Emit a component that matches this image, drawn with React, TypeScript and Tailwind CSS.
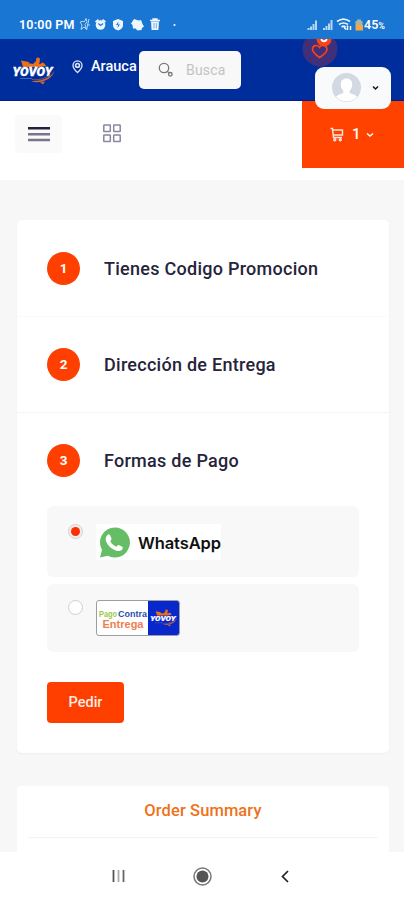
import React, { useState } from 'react';

type PaymentId = 'whatsapp' | 'contraentrega';

const STEPS = ['Tienes Codigo Promocion', 'Dirección de Entrega'];

function YovoyLogo({ className }: { className?: string }) {
  return (
    <svg className={className} viewBox="0 0 44 28" fill="none">
      {/* rider */}
      <path d="M9 3.5l8 1.5-1 5h-5z" fill="#e9711c" />
      <path d="M16 6l5 1 4-4 3 1-1 3 5-1 2 3-6 1H14z" fill="#e9711c" />
      <circle cx="26" cy="2.6" r="2" fill="#e9711c" />
      <path d="M30 5l4 4h-5z" fill="#e9711c" />
      <text
        x="0.5"
        y="19"
        textLength="40"
        lengthAdjust="spacingAndGlyphs"
        fill="#fff"
        stroke="#fff"
        strokeWidth="0.3"
        fontFamily="Roboto, sans-serif"
        fontSize="12"
        fontWeight="900"
        fontStyle="italic"
      >
        YOVOY
      </text>
      <path d="M8 21.5h12" stroke="#4f73bd" strokeWidth="0.8" />
      <path d="M19 24c8 3.5 22-1 23.5-11C40 20 31 24.5 19 24z" fill="#cf6a34" />
      <path d="M20 22.5c7 1 14-1 18-5" stroke="#a85b52" strokeWidth="0.8" />
      <path d="M28 25l3 2.5 2-3" fill="#cf6a34" />
    </svg>
  );
}

function StatusBar() {
  return (
    <div className="flex h-[39px] items-start bg-[#1976d2] pt-[17px] text-white">
      <span className="ml-[19px] w-[57px] whitespace-nowrap text-[12.5px] leading-4 font-semibold tracking-[0.2px]">10:00 PM</span>
      <svg className="ml-[3px]" width="100" height="16" viewBox="0 0 100 16" fill="#eef6fd">
        <path d="M1.5 4.5l4 .2L7 1.5l1 3.3M8 5l-2 2.5 1.5 5L5 10l-3 2.5L3 8 1 5M10 2L7.5 13M8 8h3" stroke="#b9daf6" strokeWidth="1" fill="none" />
        <circle cx="21.5" cy="8" r="4.8" />
        <path d="M16.5 5l3-2.3M26.5 5l-3-2.3" stroke="#eef6fd" strokeWidth="1.6" />
        <path d="M19.3 6.5l2.3 2 2.5-2" stroke="#1976d2" strokeWidth="1.1" fill="none" />
        <path d="M39 2l5 2v4.5c0 2.5-2.5 4.2-5 5-2.5-.8-5-2.5-5-5V4z" />
        <path d="M39.5 4.5L37 8h2l-.5 3L41 7.500h-2z" fill="#1976d2" />
        <path d="M55 2l4.500 1.500 2.500-.5 1.500 4 1.500 2.500-2 1.500-.5 2-4 .5-2-2-2.500 0-.5-3.500-1.500-1.500z" />
        <path d="M71 3.500h10M74 3V2h4v1" stroke="#eef6fd" strokeWidth="1.3" fill="none" />
        <path d="M72 4.500h8l-.6 8.500h-6.800z" />
        <path d="M75 6v5.500M77.300 6v5.500" stroke="#6da8e0" strokeWidth="0.9" />
        <circle cx="95.500" cy="8" r="1.100" />
      </svg>
      <svg className="ml-[127px]" width="59" height="16" viewBox="0 0 59 16" fill="none">
        <path d="M2.500 13v-2M5 13V9.500M7.500 13V7M10 13V3.500M18 13v-2M20.500 13V9M23 13V6.500M25.500 13V3" stroke="#b6d6f3" strokeWidth="2" />
        <path d="M31 4.500c4-3 9-3 13 0M33 7.500c3-2 6-2 9 0M35.500 10c1.500-1 3-1 4 0" stroke="#e6f2fc" strokeWidth="1.700" />
        <path d="M38 10l2 2.500M41.500 13V8.500M44.500 9v4" stroke="#fff" strokeWidth="1.500" />
        <path d="M51 2.500h4V4h1.500v4.500h-7V4H51z" fill="#a9b5a4" />
        <path d="M49.500 8h7.500v5.500h-7.500z" fill="#f5a742" />
      </svg>
      <span className="-ml-px whitespace-nowrap text-[12.5px] leading-4 font-semibold">
        45<span className="text-[9px]">%</span>
      </span>
    </div>
  );
}

function Header() {
  return (
    <header className="relative flex h-[62px] items-start border-b border-[#001f86] bg-[#002d9c]">
      <YovoyLogo className="mt-[18px] ml-3 h-7 w-11" />
      <svg className="mt-[21px] ml-4 h-[14px] w-[11px]" viewBox="0 0 11 14" fill="none" stroke="#dfe6f8">
        <path d="M5.500 12.500C3 10.200 1 8 1 5.400a4.500 4.500 0 019 0c0 2.600-2 4.800-4.500 7.100z" strokeWidth="1.300" />
        <circle cx="5.500" cy="5.400" r="1.900" strokeWidth="1.600" />
      </svg>
      <span className="mt-[18px] ml-2 w-12 text-[14.500px] leading-5 font-medium text-white">Arauca</span>
      <div className="mt-3 flex h-[38px] w-[102px] items-center rounded-[5px] bg-[#f8f8f8] pl-[19px]">
        <svg className="h-4 w-4" viewBox="0 0 16 16" fill="none" stroke="#777" strokeWidth="1.300">
          <circle cx="6" cy="6" r="4.700" />
          <path d="M9.300 9.300l1.500 1.500" />
          <circle cx="12.300" cy="12.300" r="1.800" />
        </svg>
        <span className="ml-[12px] text-[14px] tracking-[0.2px] text-[#c3c3c3]">Busca</span>
      </div>

      {/* favourites, cut off by the top edge of the bar */}
      <div className="absolute top-0 right-[66px] h-7 w-9 overflow-hidden">
        <svg className="h-7 w-9" viewBox="0 0 36 28" fill="none">
          <circle cx="18" cy="10" r="17.500" fill="#40307a" />
          <circle cx="22" cy="0" r="7.500" fill="#fa4318" />
          <path d="M17.500 18.500C14 16 10.500 13.500 10.500 10.300c0-4.200 5-5 7-2 2-3 7.500-2.200 7.500 2 0 3.200-3.500 5.700-7.500 8.200z" fill="#40307a" stroke="#fa4318" strokeWidth="1.600" />
          <path d="M19.500 0c0 3 5 3 5 0" stroke="#fff" strokeWidth="1.800" />
        </svg>
      </div>

      <button className="absolute top-7 right-[13px] z-10 flex h-[42px] w-[76px] items-center rounded-[9px] bg-[#f9fafb] pl-[17px]">
        <svg className="h-[30px] w-[29px]" viewBox="0 0 29 30">
          <circle cx="14.500" cy="14.500" r="14.500" fill="#d2d9e3" />
          <path d="M14.500 5.500c4 0 5.700 2.500 5.700 6 0 2.700-.9 4.700-2.500 6.200v2.300c2.500 1.300 6 1.500 7.300 3.800a14.500 14.500 0 01-21 0c1.300-2.300 4.800-2.500 7.300-3.800v-2.300c-1.600-1.500-2.500-3.500-2.500-6.200 0-3.500 1.700-6 5.700-6z" fill="#fff" />
        </svg>
        <svg className="ml-[11px] h-[6px] w-[7px]" viewBox="0 0 7 6" fill="none" stroke="#171717" strokeWidth="1.500">
          <path d="M1 1.500L3.500 4 6 1.500" />
        </svg>
      </button>
    </header>
  );
}

function Toolbar() {
  return (
    <div className="flex h-[79px] items-start bg-white">
      <button className="mt-[14px] ml-[15px] flex h-[38px] w-[47px] items-center justify-center rounded bg-[#fafafa]">
        <svg className="h-4 w-[22px]" viewBox="0 0 22 16">
          <path d="M0 1h22v2.500H0z" fill="#24203c" />
          <path d="M0 7h22v2.500H0zM0 12.700h22v2.500H0z" fill="#777589" />
        </svg>
      </button>
      <svg className="mt-[23px] ml-[41px] h-[19px] w-[18px]" viewBox="0 0 18 19" fill="none" stroke="#8886a0" strokeWidth="1.500">
        <rect x="0.800" y="1" width="6.500" height="6.500" rx="0.500" />
        <rect x="10.700" y="1" width="6.500" height="6.500" rx="0.500" />
        <rect x="0.800" y="11" width="6.500" height="6.500" rx="0.500" />
        <rect x="10.700" y="11" width="6.500" height="6.500" rx="0.500" />
      </svg>
      <button className="ml-auto flex h-[67px] w-[102px] items-center bg-[#ff4200] pl-7 text-white">
        <svg className="h-[15px] w-[14px]" viewBox="0 0 14 15" fill="none" stroke="#ffe6dc" strokeWidth="1.400">
          <path d="M0.500 1.500h2l1 9h8.500M3 3h9.500v5H3.500" />
          <circle cx="4.800" cy="12.700" r="1" />
          <circle cx="10.300" cy="12.700" r="1" />
        </svg>
        <span className="ml-2 text-[15px] font-medium">1</span>
        <svg className="ml-[5px] h-[6px] w-2" viewBox="0 0 8 6" fill="none" stroke="#fff" strokeWidth="1.400">
          <path d="M1 1.500L4 4l3-2.500" />
        </svg>
      </button>
    </div>
  );
}

function StepTitle({ step, title }: { step: number; title: string }) {
  return (
    <div className="flex h-24 items-center pl-[30px]">
      <span className="flex h-[33px] w-[33px] items-center justify-center rounded-full bg-[#ff3f00] text-[13.500px] font-bold text-white">
        {step}
      </span>
      <h2 className="mt-px ml-6 text-[18px] font-medium tracking-[0.27px] text-[#26243a]">{title}</h2>
    </div>
  );
}

function Radio({ checked }: { checked: boolean }) {
  return (
    <span
      className={`flex h-[15px] w-[15px] shrink-0 items-center justify-center rounded-full border ${
        checked ? 'border-[#d8cfca] bg-[#f3eeeb]' : 'border-[#cfcfcf] bg-white'
      }`}
    >
      {checked && <span className="h-[9px] w-[9px] rounded-full bg-[#fb2e05]" />}
    </span>
  );
}

function WhatsAppBadge() {
  return (
    <span className="flex h-9 w-[125px] items-center bg-white pl-[3px]">
      <svg className="h-[31px] w-[31px]" viewBox="0 0 31 31">
        <path d="M15.800 0.500a15 15 0 11-7 28.200L1 30.500l2-7.500A15 15 0 0115.800.500z" fill="#65bd65" />
        <path
          d="M8.200 8.200c1-1.200 2.200-1.200 2.800-.2l1.500 3.400c.3 1-.5 1.600-1.200 2.500 1.300 2.700 3.300 4.600 6.200 5.800.8-.9 1.400-1.900 2.200-1.600l3.600 1.700c1 .6.400 2.300-.5 3.100-2 1.600-4.700 1.200-7.700-.2-3.700-1.800-6.700-5-8-8.300-.8-2.500-.3-4.700 1.100-6.200z"
          fill="#fff"
        />
      </svg>
      <span className="mt-[2px] ml-2 font-['Inter',sans-serif] text-[16.500px] font-semibold tracking-[-0.1px] text-[#111]">WhatsApp</span>
    </span>
  );
}

function ContraEntregaBadge() {
  return (
    <span className="flex h-[36px] w-[84px] overflow-hidden rounded-[3px] border border-[#9a9da5] bg-white">
      <svg className="h-[34px] w-[51px] shrink-0" viewBox="0 0 51 34" fontFamily="Liberation Sans, sans-serif" fontWeight="700">
        <text x="2" y="15.500" fontSize="9" textLength="18" lengthAdjust="spacingAndGlyphs" fill="#9bc84b">Pago</text>
        <text x="21" y="15.500" fontSize="9.500" textLength="29" lengthAdjust="spacingAndGlyphs" fill="#2b4eac">Contra</text>
        <text x="5.500" y="26.500" fontSize="11" textLength="41" lengthAdjust="spacingAndGlyphs" fill="#ed8050">Entrega</text>
      </svg>
      <span className="flex flex-1 items-center justify-center bg-[#0828cc]">
        <YovoyLogo className="h-[18px] w-[28px]" />
      </span>
    </span>
  );
}

function BottomNav() {
  return (
    <nav className="flex h-12 items-center bg-white">
      <svg className="ml-28 h-3 w-[13px]" viewBox="0 0 13 12" strokeWidth="1.800">
        <path d="M1.500 0v12" stroke="#555" />
        <path d="M6.500 0v12" stroke="#aaa" />
        <path d="M11.500 0v12" stroke="#666" />
      </svg>
      <svg className="ml-[68px] h-[19px] w-[19px]" viewBox="0 0 19 19">
        <circle cx="9.500" cy="9.500" r="8.500" fill="none" stroke="#777" strokeWidth="1.500" />
        <circle cx="9.500" cy="9.500" r="6" fill="#555" />
      </svg>
      <svg className="ml-[69px] h-[13px] w-2" viewBox="0 0 8 13" fill="none" stroke="#222" strokeWidth="1.700">
        <path d="M7 1L1.500 6.500 7 12" />
      </svg>
    </nav>
  );
}

export default function App() {
  const [payment, setPayment] = useState<PaymentId>('whatsapp');

  return (
    <div className="flex h-[900px] w-[404px] flex-col overflow-hidden bg-[#f7f7f7] font-['Roboto',sans-serif]">
      <StatusBar />
      <Header />
      <Toolbar />

      <main className="flex min-h-0 flex-1 flex-col overflow-hidden pt-10 pr-[15px] pl-[17px]">
        <section className="h-[533px] shrink-0 rounded-[5px] bg-white shadow-[0_1px_2px_rgba(0,0,0,0.04)]">
          {STEPS.map((title, i) => (
            <div key={title} className={i === 0 ? '-mb-px border-b border-[#fafafa]' : '-mb-px border-b border-[#f4f4f4]'}>
              <StepTitle step={i + 1} title={title} />
            </div>
          ))}
          <StepTitle step={3} title="Formas de Pago" />

          <div className="flex flex-col pr-[30px] pl-[30px]">
            <button
              onClick={() => setPayment('whatsapp')}
              className="-mt-[2px] flex h-[71px] items-start rounded-md bg-[#f8f8f8] pt-[18px] pl-[21px]"
            >
              <Radio checked={payment === 'whatsapp'} />
              <span className="ml-[13px]">
                <WhatsAppBadge />
              </span>
            </button>
            <button
              onClick={() => setPayment('contraentrega')}
              className="mt-[7px] flex h-[68px] items-start rounded-md bg-[#f8f8f8] pt-4 pl-[21px]"
            >
              <Radio checked={payment === 'contraentrega'} />
              <span className="ml-[13px]">
                <ContraEntregaBadge />
              </span>
            </button>
          </div>

          <button className="mt-[30px] ml-[30px] h-[41px] w-[77px] rounded-[4px] bg-[#ff3f00] text-[14.500px] font-medium text-[#ffece5]">
            Pedir
          </button>
        </section>

        <section className="mt-[33px] flex-1 rounded-t-[4px] bg-white px-[11px]">
          <h3 className="flex h-[52px] items-center justify-center border-b border-[#f3f3f3] text-[16.500px] font-medium text-[#ee7219]">
            <span className="-mt-px tracking-[0.1px]">Order Summary</span>
          </h3>
        </section>
      </main>

      <BottomNav />
    </div>
  );
}
